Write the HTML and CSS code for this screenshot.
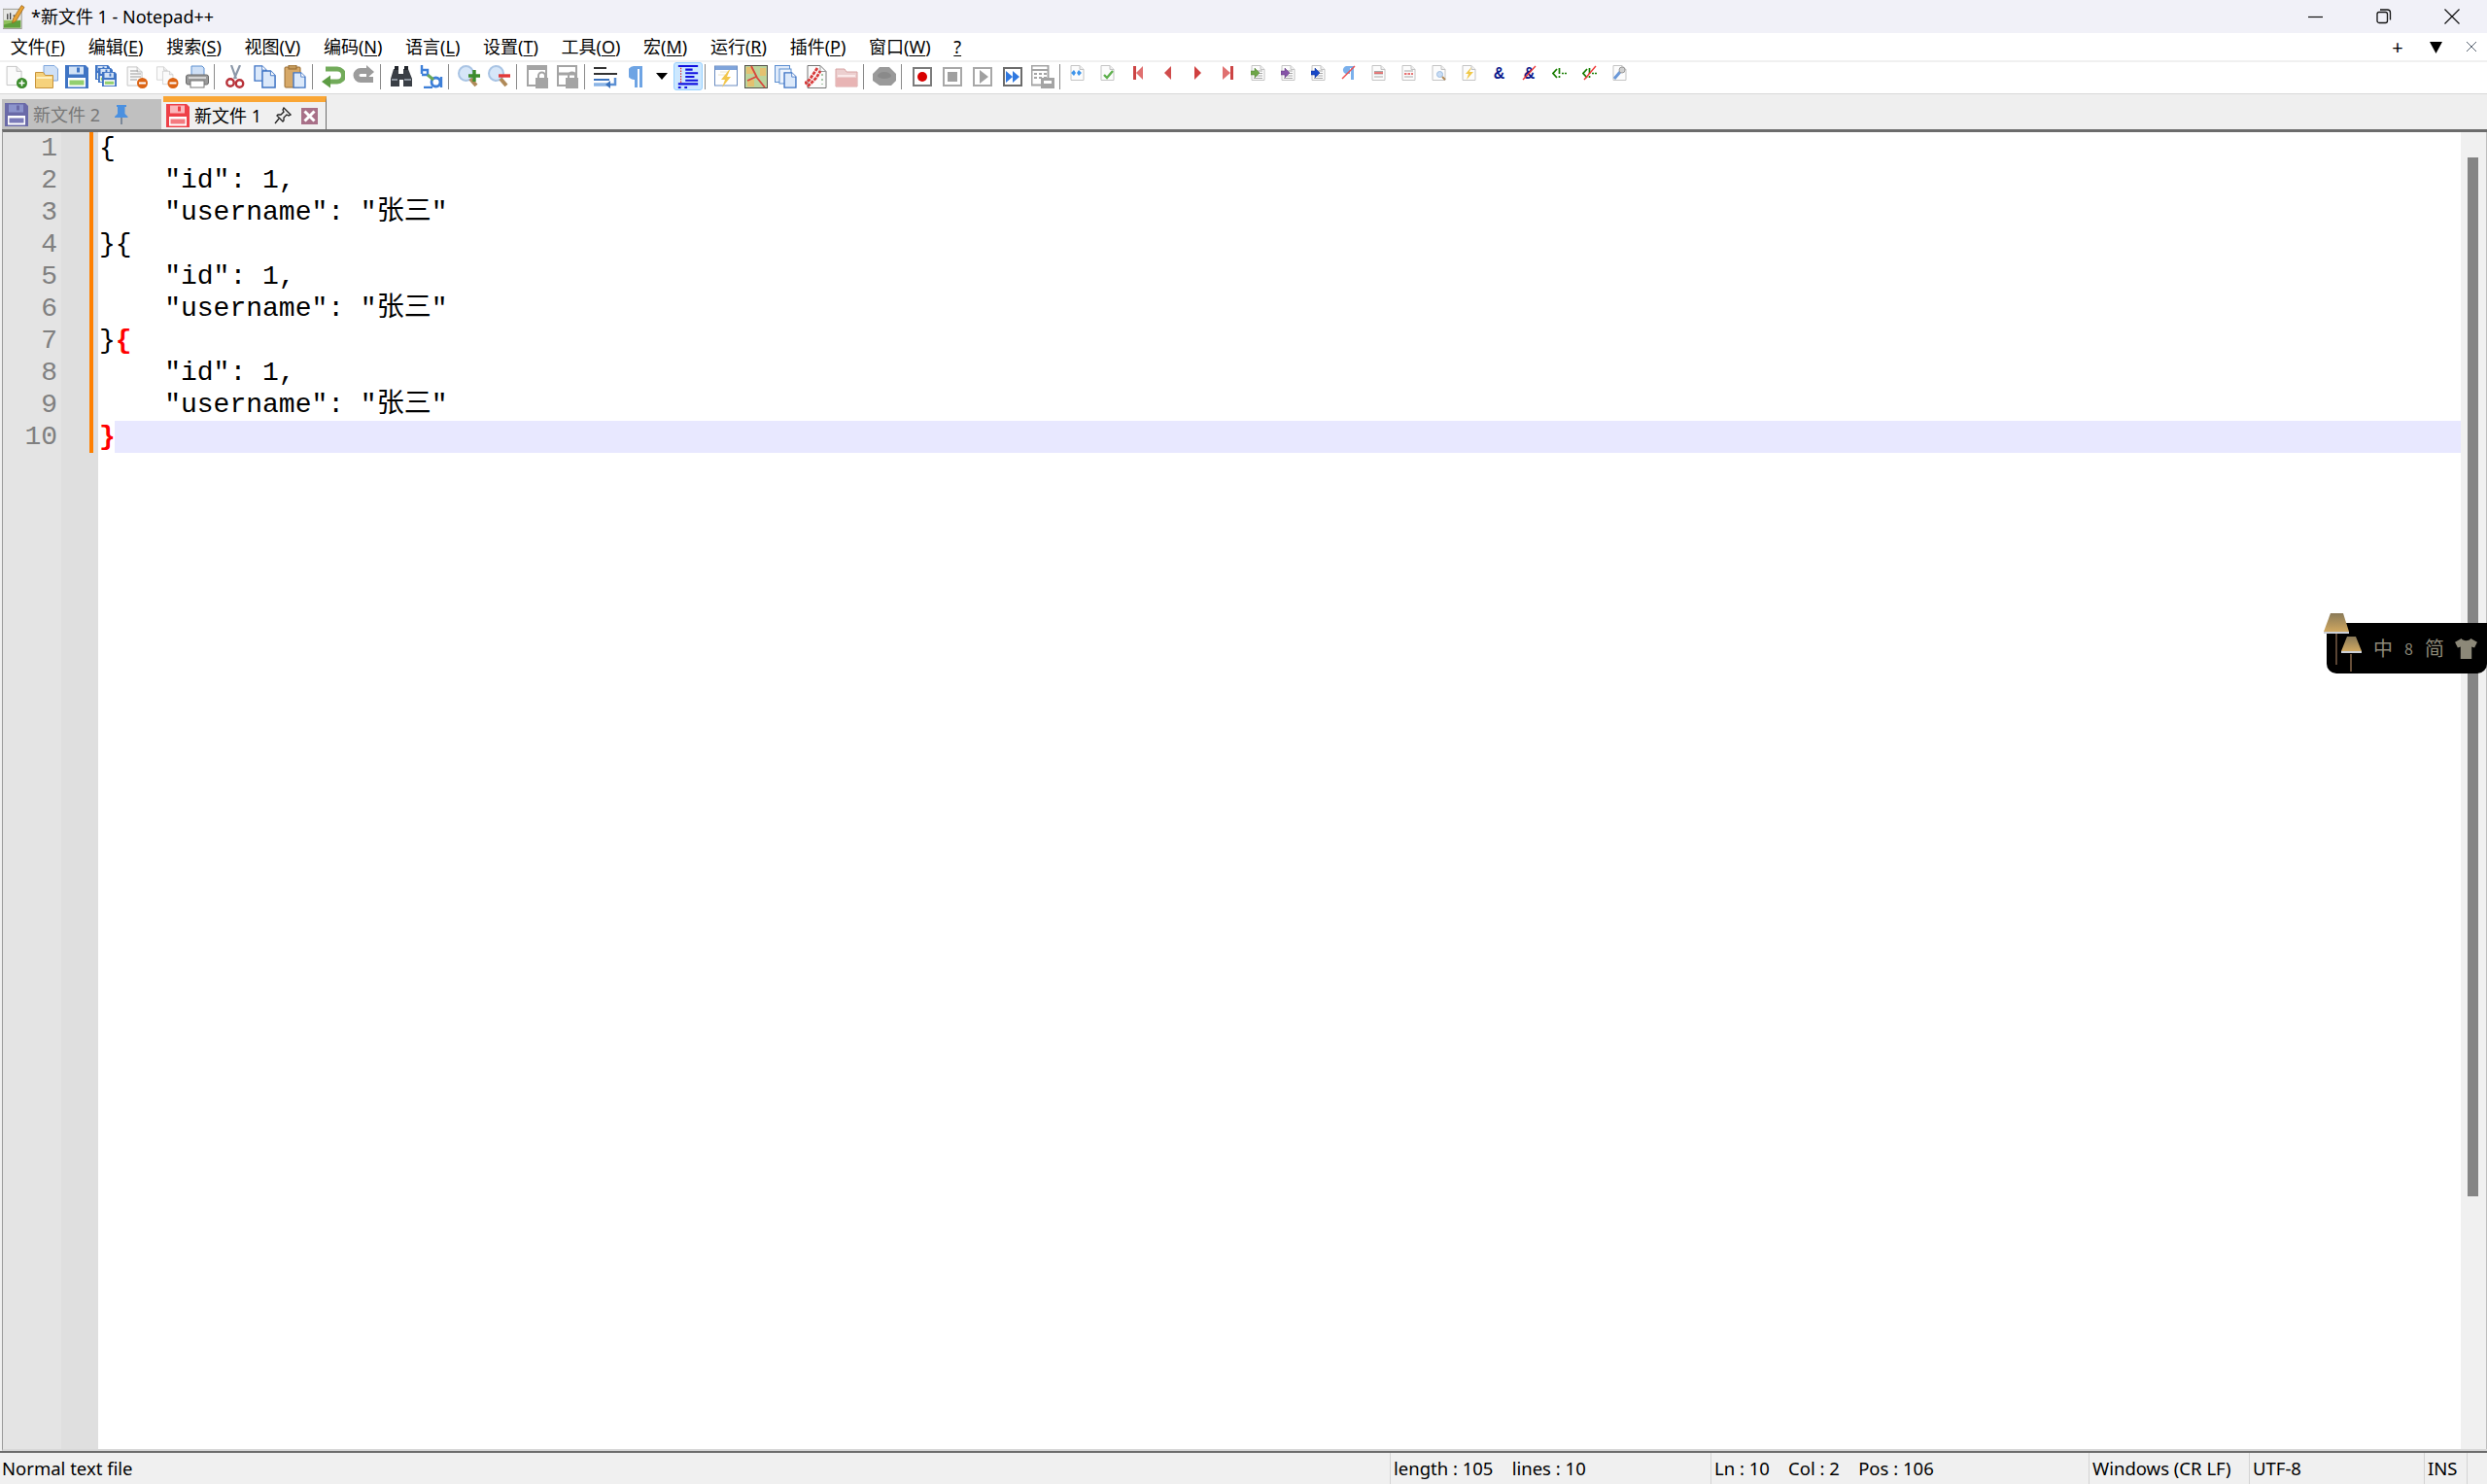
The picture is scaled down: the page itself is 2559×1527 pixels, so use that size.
FILE: index.html
```html
<!DOCTYPE html>
<html>
<head>
  <title>*新文件 1 - Notepad++</title>
  <link rel="stylesheet" href="styles.css">
</head>
<body>
  <!-- shared icon shapes -->
  <svg class="defs">
    <symbol id="floppy" viewBox="0 0 24 24">
      <path d="M0 0h21l3 3v21H0z" fill="var(--a)"/>
      <rect x="4" y="1.5" width="15" height="8" fill="var(--b)"/>
      <rect x="12" y="2.5" width="3" height="5" fill="var(--a)"/>
      <rect x="3" y="13" width="18" height="9.5" fill="#fff"/>
      <rect x="4.5" y="15.5" width="15" height="5" fill="var(--c)"/>
    </symbol>
    <symbol id="page" viewBox="0 0 24 24">
      <path d="M2.5 .5h12l6 6v17h-18z" fill="#fbfbfb" stroke="#bcbcbc"/>
      <path d="M14.5 .5v6h6" fill="#eee" stroke="#bcbcbc"/>
    </symbol>
    <symbol id="bluepage" viewBox="0 0 16 20">
      <path d="M1 1h9l5 5v13H1z" fill="#dce9fa" stroke="#3f74c4" stroke-width="1.6"/>
      <path d="M10 1v5h5" fill="#fff" stroke="#3f74c4"/>
    </symbol>
    <symbol id="smallpage" viewBox="0 0 15 16">
      <path d="M1 .5h9l4 4v11H1z" fill="#fcfcfc" stroke="#c4c4c4"/>
      <path d="M10 .5v4h4" fill="#eee" stroke="#c4c4c4"/>
    </symbol>
    <symbol id="linedpage" viewBox="0 0 15 16">
      <use href="#smallpage" width="15" height="16"/>
      <path d="M6 6h6M6 8.500h6M6 11h6M3 13.500h9" stroke="#a8a8a8"/>
    </symbol>
    <symbol id="lockbox" viewBox="0 0 22 24">
      <rect x="1" y="1" width="19" height="20" fill="#fff" stroke="#a4a4a4" stroke-width="2"/>
      <rect x="1" y="1" width="19" height="4" fill="#a4a4a4"/>
      <path d="M12 14v-3a3.500 3.500 0 0 1 7 0v3" fill="none" stroke="#a4a4a4" stroke-width="2"/>
      <rect x="9" y="13" width="13" height="11" fill="#a4a4a4"/>
    </symbol>
    <symbol id="magnifier" viewBox="0 0 22 24">
      <circle cx="8.500" cy="8.500" r="7.500" fill="#d6e6f8" stroke="#a9c4e4" stroke-width="2"/>
      <path d="M13 14l6 7" stroke="#b08a58" stroke-width="4"/>
    </symbol>
  </svg>

  <div class="window">
    <header class="titlebar">
      <svg class="app-icon" viewBox="0 0 24 26">
        <rect x="0" y="5" width="20" height="21" fill="#e6e6e4" stroke="#9a9a90"/>
        <rect x="1" y="17" width="18" height="8" fill="#8fbf5c"/>
        <path d="M1 22l18-5v8H1z" fill="#5fa03a"/>
        <path d="M5 10v6M8 9v7M11 12h2M14 12h2" stroke="#333" stroke-width="1.300"/>
        <path d="M20 1l3 2-9 15-4 2 1-5z" fill="#e8a030" stroke="#8a5a18" stroke-width=".7"/>
      </svg>
      <span class="window-title">*新文件 1 - Notepad++</span>
      <div class="win-btns">
        <div class="win-btn"><svg viewBox="0 0 16 16"><path d="M0 8.500h15" stroke="#111" stroke-width="1.200"/></svg></div>
        <div class="win-btn"><svg viewBox="0 0 16 16"><rect x="1" y="3.500" width="10.500" height="11" rx="2" fill="none" stroke="#111" stroke-width="1.300"/><path d="M4 1h7.500a3 3 0 0 1 3 3v7.500" fill="none" stroke="#111" stroke-width="1.300"/></svg></div>
        <div class="win-btn"><svg viewBox="0 0 16 16"><path d="M.5 .5l15 15M15.500 .5l-15 15" stroke="#111" stroke-width="1.200"/></svg></div>
      </div>
    </header>

    <nav class="menubar">
      <span class="menu-item">文件(<u>F</u>)</span>
      <span class="menu-item">编辑(<u>E</u>)</span>
      <span class="menu-item">搜索(<u>S</u>)</span>
      <span class="menu-item">视图(<u>V</u>)</span>
      <span class="menu-item">编码(<u>N</u>)</span>
      <span class="menu-item">语言(<u>L</u>)</span>
      <span class="menu-item">设置(<u>T</u>)</span>
      <span class="menu-item">工具(<u>O</u>)</span>
      <span class="menu-item">宏(<u>M</u>)</span>
      <span class="menu-item">运行(<u>R</u>)</span>
      <span class="menu-item">插件(<u>P</u>)</span>
      <span class="menu-item">窗口(<u>W</u>)</span>
      <span class="menu-item"><u>?</u></span>
      <div class="menu-right">
        <span class="menu-ctl">+</span>
        <span class="menu-ctl menu-ctl-arrow"><svg class="menu-arrow" viewBox="0 0 12 12"><path d="M0 1h12L6 12z" fill="#000"/></svg></span>
        <span class="menu-ctl"><svg class="menu-x" viewBox="0 0 10 10"><path d="M0 0l10 10M10 0L0 10" stroke="#55606e" stroke-width="1"/></svg></span>
      </div>
    </nav>

    <div class="toolbar">
      <!-- new, open, save, save all, close, close all, print -->
      <div class="tb"><svg class="ic" viewBox="0 0 24 24"><use href="#page" width="20" height="22"/><circle cx="17.500" cy="18.500" r="5.500" fill="#3c8c2c"/><path d="M14.500 18.500h6M17.500 15.500v6" stroke="#fff" stroke-width="1.600"/></svg></div>
      <div class="tb"><svg class="ic" viewBox="0 0 24 24"><path d="M9 .5h11l3.500 3.500v12H9z" fill="#cfe0f6" stroke="#7fa6dc"/><path d="M.5 7.500h8l2 3h8v13H.5z" fill="#f6d27c" stroke="#c8933a"/><path d="M1.500 13h16" stroke="#fff0c0" stroke-width="2"/></svg></div>
      <div class="tb"><svg class="ic fl-blue"><use href="#floppy"/></svg></div>
      <div class="tb"><svg class="ic fl-blue" viewBox="0 0 24 24"><use href="#floppy" x="0" y="0" width="15" height="15"/><use href="#floppy" x="3" y="3" width="15" height="15"/><use href="#floppy" x="7" y="7" width="15" height="15"/></svg></div>
      <div class="tb"><svg class="ic" viewBox="0 0 24 24"><use href="#page" width="20" height="23"/><path d="M5 6h8M5 9h11M5 12h11M5 15h7" stroke="#999"/><circle cx="17.500" cy="18.500" r="5.500" fill="#dc6414"/><path d="M14 18.500h7" stroke="#fff" stroke-width="2"/></svg></div>
      <div class="tb"><svg class="ic" viewBox="0 0 24 24"><use href="#page" width="14" height="17"/><use href="#page" x="6" y="4" width="14" height="18"/><circle cx="18" cy="18.500" r="5.500" fill="#dc6414"/><path d="M14.500 18.500h7" stroke="#fff" stroke-width="2"/></svg></div>
      <div class="tb"><svg class="ic" viewBox="0 0 24 24"><path d="M6 1h11l2 2v8H6z" fill="#cfe0f6" stroke="#5d8fd0"/><rect x=".5" y="10" width="23" height="10" rx="2" fill="#9a9a9a" stroke="#6a6a6a"/><rect x="5" y="16" width="14" height="7" fill="#fff" stroke="#777"/><path d="M3 13h18" stroke="#d4d4d4" stroke-width="2"/></svg></div>
      <div class="sep"></div>
      <!-- cut, copy, paste -->
      <div class="tb"><svg class="ic" viewBox="0 0 24 24"><path d="M17 0l-6 14M8 0l5 14" stroke="#8b97a8" stroke-width="2.200"/><circle cx="7" cy="18" r="3.700" fill="#fff" stroke="#b8323a" stroke-width="2.400"/><circle cx="16.500" cy="19" r="3.700" fill="#fff" stroke="#b8323a" stroke-width="2.400"/></svg></div>
      <div class="tb"><svg class="ic" viewBox="0 0 24 24"><use href="#bluepage" x="0" y="0" width="14" height="17"/><use href="#bluepage" x="8" y="5" width="15" height="19"/></svg></div>
      <div class="tb"><svg class="ic" viewBox="0 0 24 24"><rect x="1" y="2" width="16" height="21" rx="1" fill="#d7a968" stroke="#966a30"/><rect x="5" y="0" width="8" height="4" fill="#c49a5c" stroke="#966a30"/><use href="#bluepage" x="9" y="7" width="14" height="17"/></svg></div>
      <div class="sep"></div>
      <!-- undo, redo -->
      <div class="tb"><svg class="ic" viewBox="0 0 24 24"><path d="M4 4h12a5.500 5.500 0 0 1 0 13H8" fill="none" stroke="#72ab5a" stroke-width="5"/><path d="M9 10.500v13L0 17z" fill="#5d9c44"/></svg></div>
      <div class="tb"><svg class="ic" viewBox="0 0 24 24"><path d="M22 15H9a4.500 4.500 0 0 1 0-9h7" fill="none" stroke="#9c9c9c" stroke-width="6"/><path d="M15 0v14l8-7z" fill="#9c9c9c"/></svg></div>
      <div class="sep"></div>
      <!-- find, replace -->
      <div class="tb"><svg class="ic" viewBox="0 0 24 24"><path d="M4 4h5v5h5V4h5l4 10v8h-9v-7h-4v7H1v-8z" fill="#3a3f46"/><path d="M2 15h6M15 15h7" stroke="#8a929c" stroke-width="2"/><rect x="5" y="1" width="4" height="4" fill="#20242a"/><rect x="15" y="1" width="4" height="4" fill="#20242a"/></svg></div>
      <div class="tb"><svg class="ic" viewBox="0 0 24 24"><path d="M2 0v9M2 5h6v5H2" fill="none" stroke="#3d7fd8" stroke-width="2.400"/><circle cx="16.500" cy="17.500" r="4.500" fill="none" stroke="#3d7fd8" stroke-width="2.800"/><path d="M22 12v11M4 23h9" stroke="#3d7fd8" stroke-width="2.400"/><path d="M8 10l6 5" stroke="#6aa858" stroke-width="3"/></svg></div>
      <div class="sep"></div>
      <!-- zoom in, zoom out -->
      <div class="tb"><svg class="ic" viewBox="0 0 24 24"><use href="#magnifier" width="22" height="24"/><path d="M17 5v12M11 11h12" stroke="#3c8c2c" stroke-width="3.400"/></svg></div>
      <div class="tb"><svg class="ic" viewBox="0 0 24 24"><use href="#magnifier" width="22" height="24"/><path d="M11 11h12" stroke="#e23838" stroke-width="3.400"/></svg></div>
      <div class="sep"></div>
      <!-- sync scroll -->
      <div class="tb"><svg class="ic"><use href="#lockbox"/></svg></div>
      <div class="tb"><svg class="ic" viewBox="0 0 22 24"><rect x="1" y="1" width="19" height="20" fill="#fff" stroke="#a4a4a4" stroke-width="2"/><path d="M1 9h19" stroke="#a4a4a4" stroke-width="3"/><path d="M12 14v-3a3.500 3.500 0 0 1 7 0v3" fill="none" stroke="#a4a4a4" stroke-width="2"/><rect x="9" y="13" width="13" height="11" fill="#a4a4a4"/></svg></div>
      <div class="sep"></div>
      <!-- wrap, all chars, indent guide -->
      <div class="tb"><svg class="ic" viewBox="0 0 24 24"><path d="M0 3h13M0 9h24" stroke="#333" stroke-width="2"/><path d="M0 15h16" stroke="#3a72bd" stroke-width="2"/><path d="M0 20h14" stroke="#8ab4e6" stroke-width="3.500"/><path d="M22 13v7h-7" fill="none" stroke="#5c90d4" stroke-width="2.500"/><path d="M17 16v8l-5-4z" fill="#3a72bd"/></svg></div>
      <div class="tb"><svg class="ic pilcrow" viewBox="0 0 14 24"><path d="M5 1h9v22h-3V4H9v19H6V15A7 7 0 0 1 5 1z" fill="#6ea4e4"/></svg></div>
      <div class="tb tb-narrow"><svg class="drop" viewBox="0 0 12 7"><path d="M0 0h12L6 7z" fill="#000"/></svg></div>
      <div class="tb tb-active"><svg class="ic" viewBox="0 0 24 26"><path d="M1 1h22M9 5h8M9 9h14M9 13h10M9 17h14M1 21h22M1 25h3" stroke="#1212e0" stroke-width="2.200" fill="none"/><path d="M4 3v17" stroke="#e02020" stroke-dasharray="1.500 1.500" stroke-width="1.200"/><path d="M8 25h3" stroke="#1212e0" stroke-width="2.200"/></svg></div>
      <div class="sep"></div>
      <!-- udl, doc map, doc list, function list, folder -->
      <div class="tb"><svg class="ic" viewBox="0 0 24 24"><rect x=".5" y="1" width="23" height="20" fill="#fff" stroke="#6a8cc0"/><rect x="1" y="1" width="22" height="4" fill="#7fa4da"/><path d="M6 7h9M4 10h7" stroke="#e9e2c8"/><path d="M15 5L7 15h4l-3 8 9-11h-4l3-7z" fill="#f2c64a"/></svg></div>
      <div class="tb"><svg class="ic" viewBox="0 0 24 24"><rect x=".5" y=".5" width="23" height="23" fill="#bcd49c" stroke="#55524a"/><path d="M2 2h7v7H2zM16 3h6v8h-6zM3 15h7v7H3z" fill="#e4c170"/><path d="M7 1l6 12 8 10M12 12l-9 4" stroke="#d8483c" stroke-width="1.800" fill="none"/></svg></div>
      <div class="tb"><svg class="ic" viewBox="0 0 24 24"><path d="M.5 .5h15v3h-15z" fill="#7fa4da"/><rect x=".5" y=".5" width="15" height="17" fill="#e0ebfa" stroke="#5d8fd0"/><rect x="5" y="4" width="12" height="15" fill="#eef4fd" stroke="#5d8fd0"/><use href="#bluepage" x="9" y="7" width="14" height="17"/></svg></div>
      <div class="tb"><svg class="ic" viewBox="0 0 24 24"><path d="M3 .5h13l6 6v17H3z" fill="#fbfbfb" stroke="#777"/><path d="M16 .5v6h6" fill="none" stroke="#999"/><path d="M13 3L5 15 1 18l3 3 8-8 4-7" fill="none" stroke="#d83a3a" stroke-width="2.800" stroke-dasharray="3.500 1"/><path d="M18 9v11" stroke="#a8c8a8" stroke-dasharray="2 3" stroke-width="2"/></svg></div>
      <div class="tb"><svg class="ic" viewBox="0 0 24 24"><path d="M1 4h9l2 3h11v15H1z" fill="#eccfcf" stroke="#d8a4a4"/><path d="M3 10h18v2H3z" fill="#fbeaea"/><path d="M1.500 13h21v9h-21z" fill="#e8b4b4"/></svg></div>
      <div class="sep"></div>
      <!-- monitoring -->
      <div class="tb"><svg class="ic" viewBox="0 0 24 24"><path d="M7 2h10l7 7v7l-5 5H7l-7-5V9z" fill="#9a9a9a"/><path d="M5 11a7 4 0 0 1 14 0 7 3 0 0 1-14 0z" fill="#8a8a8a"/></svg></div>
      <div class="sep"></div>
      <!-- macro -->
      <div class="tb"><svg class="ic macro" viewBox="0 0 20 20"><rect x="1" y="1" width="18" height="18" fill="#fff" stroke="#7c7c7c" stroke-width="2"/><circle cx="10" cy="10" r="5" fill="#d80000"/></svg></div>
      <div class="tb"><svg class="ic macro" viewBox="0 0 20 20"><rect x="1" y="1" width="18" height="18" fill="#fff" stroke="#a8a8a8" stroke-width="2"/><rect x="5" y="5" width="10" height="10" fill="#a0a0a0"/></svg></div>
      <div class="tb"><svg class="ic macro" viewBox="0 0 20 20"><rect x="1" y="1" width="18" height="18" fill="#fff" stroke="#a8a8a8" stroke-width="2"/><path d="M7 3l9 7-9 7z" fill="#a0a0a0"/></svg></div>
      <div class="tb"><svg class="ic macro" viewBox="0 0 20 20"><rect x="1" y="1" width="18" height="18" fill="#fff" stroke="#6c6c6c" stroke-width="2"/><path d="M3 4l7 6-7 6zM10 4l7 6-7 6z" fill="#2f78e0"/></svg></div>
      <div class="tb"><svg class="ic" viewBox="0 0 24 24"><rect x=".5" y=".5" width="17" height="20" fill="#fff" stroke="#a4a4a4" stroke-width="2"/><path d="M1 5h16M3 9h3M8 9h3M13 9h3M3 13h3M8 13h3M13 13h3" stroke="#a4a4a4" stroke-width="2"/><rect x="10" y="13" width="14" height="11" fill="#a4a4a4"/><rect x="13" y="16" width="8" height="3" fill="#fff"/></svg></div>
      <div class="sep sep-tight"></div>
      <!-- plugin buttons -->
      <div class="tb"><svg class="sm" viewBox="0 0 15 16"><use href="#smallpage"/><path d="M4 5L1 8l3 3 2-3zM9 5l3 3-3 3-2-3z" fill="#3f95ea"/></svg></div>
      <div class="tb"><svg class="sm" viewBox="0 0 15 16"><use href="#smallpage"/><path d="M4 10l3 3 6-7" fill="none" stroke="#5fb04e" stroke-width="2.400"/></svg></div>
      <div class="tb"><svg class="sm" viewBox="0 0 15 16"><rect x="3" y="1" width="3" height="14" fill="#cc4444"/><path d="M13 1v14L6 8z" fill="#e07070"/></svg></div>
      <div class="tb"><svg class="sm" viewBox="0 0 15 16"><path d="M11 1v14L4 8z" fill="#d04c4c"/></svg></div>
      <div class="tb"><svg class="sm" viewBox="0 0 15 16"><path d="M4 1v14l7-7z" fill="#d04040"/></svg></div>
      <div class="tb"><svg class="sm" viewBox="0 0 15 16"><rect x="10" y="1" width="3" height="14" fill="#cc4444"/><path d="M2 1v14l8-7z" fill="#e07070"/></svg></div>
      <div class="tb"><svg class="sm" viewBox="0 0 15 16"><use href="#linedpage"/><path d="M0 6h4V3l5 5-5 5v-3H0z" fill="#6ea648" stroke="#4c7c30" stroke-width=".5"/></svg></div>
      <div class="tb"><svg class="sm" viewBox="0 0 15 16"><use href="#linedpage"/><path d="M0 6h4V3l5 5-5 5v-3H0z" fill="#8654a8" stroke="#5c3478" stroke-width=".5"/></svg></div>
      <div class="tb"><svg class="sm" viewBox="0 0 15 16"><use href="#linedpage"/><path d="M0 6h4V3l5 5-5 5v-3H0z" fill="#1848c8" stroke="#0c2c90" stroke-width=".5"/></svg></div>
      <div class="tb"><svg class="sm" viewBox="0 0 15 16"><path d="M5 1h8v14h-3V3H9v6H7A4 4 0 0 1 5 1z" fill="#7ab0ec"/><path d="M1 14L14 1" stroke="#ec5050" stroke-width="1.400"/></svg></div>
      <div class="tb"><svg class="sm" viewBox="0 0 15 16"><use href="#smallpage"/><path d="M3 6.500h9M3 9h9" stroke="#a8a8a8"/><path d="M3 8h9" stroke="#e04848" stroke-width="1.400"/><path d="M3 12h9" stroke="#a8a8a8"/></svg></div>
      <div class="tb"><svg class="sm" viewBox="0 0 15 16"><use href="#smallpage"/><path d="M3 6h9M3 12h9" stroke="#a8a8a8"/><path d="M3 9h9" stroke="#e04848" stroke-width="1.400" stroke-dasharray="2.500 1"/></svg></div>
      <div class="tb"><svg class="sm" viewBox="0 0 15 16"><use href="#smallpage"/><circle cx="8.500" cy="9.500" r="3" fill="#c8dcf4" stroke="#9cbce0"/><path d="M11 12l3 3" stroke="#b08a58" stroke-width="2"/></svg></div>
      <div class="tb"><svg class="sm" viewBox="0 0 15 16"><use href="#smallpage"/><path d="M10 2L4 9h3l-2 6 7-8H8z" fill="#f0c848"/></svg></div>
      <div class="tb"><svg class="sm" viewBox="0 0 15 16"><text class="amp" x="7.500" y="13.500">&amp;</text></svg></div>
      <div class="tb"><svg class="sm" viewBox="0 0 15 16"><text class="amp" x="7.500" y="13.500">&amp;</text><path d="M1 15L14 1" stroke="#ee3030" stroke-width="1.300"/></svg></div>
      <div class="tb"><svg class="sm" viewBox="0 0 15 16"><path d="M5 4L1 8.500 5 13" fill="none" stroke="#187c00" stroke-width="1.700"/><path d="M7.500 3v6M7.500 11v2M10 8.500h2M13 8.500h2" stroke="#187c00" stroke-width="1.700"/></svg></div>
      <div class="tb"><svg class="sm" viewBox="0 0 15 16"><path d="M5 4L1 8.500 5 13" fill="none" stroke="#187c00" stroke-width="1.700"/><path d="M7.500 3v6M7.500 11v2M10 8.500h2M13 8.500h2" stroke="#187c00" stroke-width="1.700"/><path d="M2 15L14 1" stroke="#ee3030" stroke-width="1.300"/></svg></div>
      <div class="tb"><svg class="sm" viewBox="0 0 15 16"><use href="#smallpage"/><path d="M2 14l6-7" stroke="#6a98d8" stroke-width="3"/><circle cx="10" cy="5" r="3" fill="#d0d0d0" stroke="#9a9a9a"/></svg></div>
    </div>

    <div class="tabbar">
      <div class="tab tab-idle">
        <svg class="tab-disk fl-purple"><use href="#floppy"/></svg>
        <span class="tab-label">新文件 2</span>
        <svg class="tab-pin" viewBox="0 0 16 20"><path d="M3 0h10v2h-1.500v7l3 3v1H1v-1l3-3V2H3z" fill="#4a90e0"/><path d="M8 13v7" stroke="#6a7a90" stroke-width="1.600"/></svg>
      </div>
      <div class="tab tab-current">
        <svg class="tab-disk fl-red"><use href="#floppy"/></svg>
        <span class="tab-label">新文件 1</span>
        <svg class="tab-pin tab-pin-open" viewBox="0 0 18 18"><path d="M10 1l7 7-2 1-2-1-3 3 0 3-1 1-6-6 1-1 3 0 3-3-1-2z" fill="#eee" stroke="#222" stroke-width="1.300"/><path d="M5 12l-4 5" stroke="#222" stroke-width="1.300"/></svg>
        <svg class="tab-close" viewBox="0 0 17 17"><rect width="17" height="17" fill="#a87088"/><path d="M3.500 3.500l10 10M13.500 3.500l-10 10" stroke="#fff" stroke-width="3"/></svg>
      </div>
    </div>

    <main class="editor">
      <div class="line-numbers">
        <div>1</div><div>2</div><div>3</div><div>4</div><div>5</div>
        <div>6</div><div>7</div><div>8</div><div>9</div><div>10</div>
      </div>
      <div class="fold-margin">
        <div class="change-bar"></div>
      </div>
      <div class="code">
        <div class="line">{</div>
        <div class="line">    "id": 1,</div>
        <div class="line">    "username": "张三"</div>
        <div class="line">}{</div>
        <div class="line">    "id": 1,</div>
        <div class="line">    "username": "张三"</div>
        <div class="line">}<span class="brace-match">{</span></div>
        <div class="line">    "id": 1,</div>
        <div class="line">    "username": "张三"</div>
        <div class="line line-current"><span class="brace-match brace-end">}</span><span class="current-fill"></span></div>
      </div>
      <div class="scrollbar"><div class="scroll-thumb"></div></div>
    </main>

    <footer class="statusbar">
      <div class="st-cell st-type">Normal text file</div>
      <div class="st-cell st-len">length : 105    lines : 10</div>
      <div class="st-cell st-pos">Ln : 10    Col : 2    Pos : 106</div>
      <div class="st-cell st-eol">Windows (CR LF)</div>
      <div class="st-cell st-enc">UTF-8</div>
      <div class="st-cell st-ins">INS</div>
      <div class="st-cell st-grip"></div>
    </footer>
  </div>

  <!-- input method bar floats over the window -->
  <div class="ime-bar">
    <svg class="ime-lamps" viewBox="0 0 42 62">
      <defs>
        <linearGradient id="shade" x1="0" y1="0" x2="0" y2="1">
          <stop offset="0" stop-color="#8a7a58"/>
          <stop offset="1" stop-color="#d0a860"/>
        </linearGradient>
      </defs>
      <path d="M14 22v32" stroke="#8a6a50" stroke-width="1.300"/>
      <path d="M8 1h13l6 19H1z" fill="url(#shade)"/>
      <path d="M1 20h26v2H1z" fill="#ccd0d8"/>
      <path d="M29 43v18" stroke="#a07a58" stroke-width="1.300"/>
      <path d="M25 25h9l6 15H19z" fill="url(#shade)"/>
      <path d="M19 40h21v2H19z" fill="#ccd0d8"/>
    </svg>
    <span class="ime-text ime-zh">中</span>
    <span class="ime-text ime-dot">8</span>
    <span class="ime-text ime-zh">简</span>
    <svg class="ime-shirt" viewBox="0 0 24 22"><path d="M7 0c1 3 9 3 10 0l7 4-3 6-3-1v13H6V9L3 10 0 4z" fill="#8c8878"/></svg>
  </div>
</body>
</html>
```

FILE: styles.css
```css
* {
  margin: 0;
  padding: 0;
  box-sizing: border-box;
}

html, body {
  width: 100%;
  height: 100%;
  overflow: hidden;
}

body {
  font-family: "Noto Sans", "Noto Sans CJK SC", sans-serif;
  font-size: 18px;
  color: #000;
  background: #f0f0f0;
}

.defs {
  display: none;
}

svg {
  display: block;
}

.window {
  width: 100%;
  height: 100%;
  display: flex;
  flex-direction: column;
}

/* Title bar */
.titlebar {
  height: 34px;
  flex: none;
  display: flex;
  align-items: center;
  background: #f1f1f8;
  padding: 0 1px 0 3px;
}

.app-icon {
  width: 23px;
  height: 26px;
}

.window-title {
  margin-left: 6px;
  padding-bottom: 2px;
  font-size: 18px;
  white-space: pre;
}

.win-btns {
  margin-left: auto;
  display: flex;
}

.win-btn {
  width: 70px;
  display: flex;
  justify-content: center;
}

.win-btn svg {
  width: 16px;
  height: 16px;
}

/* Menu */
.menubar {
  height: 28px;
  flex: none;
  display: flex;
  align-items: center;
  background: #fff;
}

.menu-item {
  padding: 0 11.85px;
  white-space: pre;
  line-height: 28px;
}

.menu-item:first-child {
  margin-left: -1px;
}

.menu-item u {
  text-underline-offset: 2px;
}

.menu-right {
  margin-left: auto;
  display: flex;
  gap: 14px;
  padding-right: 4px;
}

.menu-ctl {
  width: 24px;
  height: 28px;
  display: flex;
  align-items: center;
  justify-content: center;
  font-size: 20px;
}

.menu-ctl-arrow {
  margin: 0 -1px 0 1px;
}

.menu-arrow {
  width: 13px;
  height: 13px;
}

.menu-x {
  width: 10px;
  height: 10px;
}

/* Toolbar */
.toolbar {
  height: 35px;
  flex: none;
  display: flex;
  align-items: flex-start;
  background: #fff;
  border-top: 2px solid #f0f0f0;
  border-bottom: 1px solid #d9d9d9;
  padding: 3px 0 0 1px;
}

.tb {
  width: 31px;
  flex: none;
  display: flex;
  justify-content: center;
}

.tb-narrow {
  width: 24px;
  padding-top: 8px;
}

.tb-active {
  width: 30px;
  height: 29px;
  margin-top: -3px;
  padding-top: 2px;
  background: #cce8ff;
  border: 1px solid #99d1ff;
  border-radius: 3px;
}

.ic {
  width: 24px;
  height: 24px;
}

.macro {
  width: 20px;
  height: 20px;
  margin-top: 2px;
}

.pilcrow {
  width: 14px;
}

.drop {
  width: 12px;
  height: 7px;
}

.sm {
  width: 15px;
  height: 16px;
}

.amp {
  font-family: "Liberation Sans", sans-serif;
  font-size: 16px;
  font-weight: 700;
  text-anchor: middle;
  fill: #0c1a8c;
}

.sep {
  width: 1px;
  height: 26px;
  flex: none;
  margin: -1px 5px 0 2px;
  background: #8a8a8a;
}

.sep-tight {
  margin-right: 2px;
}

.fl-blue {
  --a: #3f74c4;
  --b: #d2e2f6;
  --c: #93cf6e;
}

.fl-purple {
  --a: #6a6aa8;
  --b: #8c94cc;
  --c: #7a7ab8;
}

.fl-red {
  --a: #ee4048;
  --b: #fbb8bc;
  --c: #f47a80;
}

/* Tabs */
.tabbar {
  height: 36px;
  flex: none;
  display: flex;
  align-items: flex-end;
  background: #efefef;
  padding-left: 2px;
}

.tab {
  display: flex;
  align-items: center;
  height: 31px;
  font-size: 18px;
}

.tab-idle {
  width: 164px;
  background: #c0c0c0;
  color: #777;
  padding-left: 3px;
}

.tab-current {
  width: 168px;
  height: 34px;
  margin-left: 2px;
  background: #f0f0f0;
  border-top: 6px solid #faa635;
  border-right: 1px solid #6e6e6e;
  padding-left: 3px;
}

.tab-disk {
  width: 24px;
  height: 24px;
  flex: none;
}

.tab-label {
  margin-left: 5px;
  padding-bottom: 2px;
  white-space: pre;
}

.tab-pin {
  width: 16px;
  height: 20px;
  margin-left: 14px;
}

.tab-pin-open {
  width: 18px;
  height: 18px;
  margin-left: 13px;
}

.tab-close {
  width: 17px;
  height: 17px;
  margin-left: 10px;
}

/* Editor */
.editor {
  flex: 1;
  min-height: 0;
  display: flex;
  margin-left: 2px;
  background: #fff;
  border-top: 3px solid #6c6c6c;
  border-left: 1px solid #9a9a9a;
  border-bottom: 2px solid #d8d8d8;
  font-family: "Liberation Mono", "Noto Sans CJK SC", monospace;
  font-size: 28px;
  line-height: 33px;
}

.line-numbers {
  width: 60px;
  flex: none;
  padding-right: 4px;
  background: #e4e4e4;
  color: #808080;
  text-align: right;
}

.fold-margin {
  width: 38px;
  flex: none;
  padding-left: 29px;
  background: #dfdfdf;
}

.change-bar {
  width: 4px;
  height: 330px;
  background: #ff8000;
}

.code {
  flex: 1;
  min-width: 0;
  padding-left: 1px;
}

.line {
  height: 33px;
  white-space: pre;
}

.line-current {
  display: flex;
}

.brace-match {
  color: #f00;
  font-weight: 700;
}

.brace-end {
  width: 16px;
  flex: none;
  overflow: visible;
}

.current-fill {
  flex: 1;
  background: #e8e8ff;
}

.scrollbar {
  width: 27px;
  flex: none;
  padding: 26px 8px 0 7px;
  background: #f0f0f0;
  border-right: 1px solid #bdbdbd;
}

.scroll-thumb {
  height: 1069px;
  background: #858585;
}

/* Status bar */
.statusbar {
  height: 34px;
  flex: none;
  display: flex;
  background: #f0f0f0;
  border-top: 2px solid #6c6c6c;
  font-size: 18.5px;
  line-height: 32px;
}

.st-cell {
  padding-left: 3px;
  border-left: 1px solid #d4d4d4;
  white-space: pre;
}

.st-type {
  flex: 1;
  border-left: 0;
  padding-left: 2px;
}

.st-len {
  width: 330px;
}

.st-pos {
  width: 389px;
}

.st-eol {
  width: 165px;
}

.st-enc {
  width: 180px;
}

.st-ins {
  width: 44px;
}

.st-grip {
  width: 21px;
}

/* Input method bar */
.ime-bar {
  position: absolute;
  left: 2394px;
  top: 641px;
  width: 165px;
  height: 52px;
  display: flex;
  align-items: center;
  background: #000;
  border-radius: 10px 0 10px 10px;
  color: #8c8878;
}

.ime-lamps {
  position: absolute;
  left: -4px;
  top: -11px;
  width: 42px;
  height: 62px;
}

.ime-text {
  font-family: "Noto Sans CJK SC", sans-serif;
  font-size: 20px;
  line-height: 1;
}

.ime-bar .ime-zh:nth-of-type(1) {
  margin-left: 48px;
}

.ime-dot {
  margin: 0 12px 0 12px;
  font-size: 16px;
}

.ime-shirt {
  width: 23px;
  height: 21px;
  margin-left: 11px;
}
```
